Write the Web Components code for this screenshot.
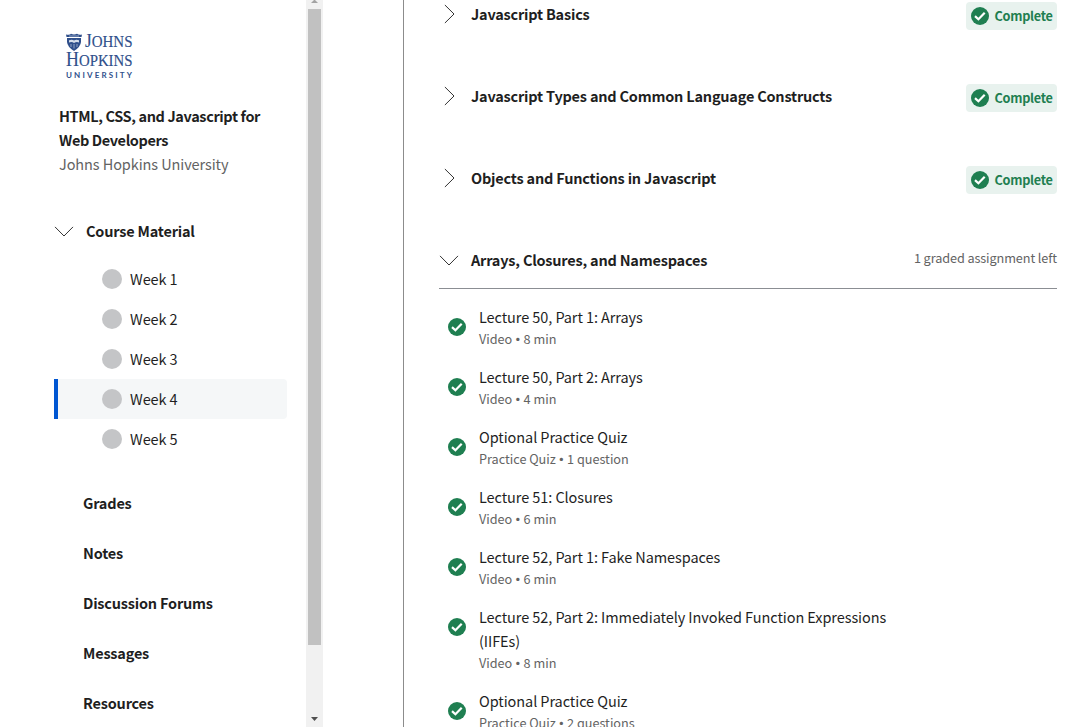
<!DOCTYPE html>
<html lang="en">
<head>
<meta charset="utf-8">
<title>HTML, CSS, and Javascript for Web Developers</title>
<style>
html,body{margin:0;height:100%;overflow:hidden;background:#fff}
body{font:14.5px/24px "Noto Sans CJK SC","Noto Sans",sans-serif;color:#1f1f1f}
</style>
</head>
<body>
<course-page></course-page>
<script>
const define = (name, html, setup) => {
  const template = document.createElement('template');
  template.innerHTML = html;
  customElements.define(name, class extends HTMLElement {
    constructor() {
      super();
      this.attachShadow({mode: 'open'}).append(template.content.cloneNode(true));
    }
    connectedCallback() { if (setup) setup(this, this.shadowRoot); }
  });
};

define('check-icon', `<style>:host{display:block;width:18px;height:18px;flex:none}svg{display:block}</style>
<svg width="18" height="18" viewBox="0 0 18 18"><circle cx="9" cy="9" r="9" fill="#1f7f51"/><path d="M4 9.100 7.400 12.200 13.700 5.700" fill="none" stroke="#fff" stroke-width="2.200"/></svg>`);

define('chevron-icon', `<style>:host{display:block;width:20px;height:20px;flex:none}:host([down]) svg{transform:rotate(90deg)}svg{display:block}</style>
<svg width="20" height="20" viewBox="0 0 20 20"><path d="M5.900 1 15 10 5.900 19" fill="none" stroke="#333" stroke-width="1"/></svg>`);

define('university-logo', `<style>:host{display:block;width:68px;height:46px}svg{display:block;overflow:visible}text{fill:#2f4f8b}.s{font-family:"Liberation Serif",serif;stroke:#2f4f8b;stroke-width:.15}.u{font:bold 8px Lato,sans-serif}</style>
<svg width="68" height="46" viewBox="0 0 68 46">
<path d="M0 1.500Q4 2.200 5 .8 8 2.300 11 .8 13 2.200 16 1.500L15.500 4H.5Z" fill="#2f4f8b"/>
<path d="M1 5H15V9Q14.500 14 8 18 1.500 14 1 9Z" fill="#2f4f8b"/>
<path d="M3 7.300Q6 6 8 7.400 10.500 6 13 7.300V9.500Q10.500 8.500 8 10 6 8.500 3 9.500Z" fill="#d5deeb"/>
<path d="M5 11V14M8 11V15.500M11 11V14M3 3H13" stroke="#a9b9d2" fill="none" stroke-width=".8"/>
<text class="s" x="19" y="14" font-size="19.500" textLength="47.500" lengthAdjust="spacingAndGlyphs">J<tspan font-size="17">OHNS</tspan></text>
<text class="s" x="0" y="33.300" font-size="20.500" textLength="66.500" lengthAdjust="spacingAndGlyphs">H<tspan font-size="17">OPKINS</tspan></text>
<text class="u" x="0" y="44.800" textLength="66">UNIVERSITY</text>
</svg>`);

define('week-link', `<style>
:host{display:flex;align-items:center;box-sizing:border-box;height:40px;padding-left:44px;gap:8px;border-left:4px solid transparent;border-radius:0 4px 4px 0}
:host([current]){background:#f5f7f8;border-left-color:#0056d2}
i{width:20px;height:20px;border-radius:50%;background:#c4c5c7}
span{height:24px;letter-spacing:-.1px}
</style><i></i><span><slot></slot></span>`);

define('nav-link', `<style>:host{display:flex;align-items:center;height:50px;padding-left:29px;font-weight:700;letter-spacing:-.2px}</style><slot></slot>`);

define('side-nav', `<style>
:host{display:block;box-sizing:border-box;width:306px;height:727px;overflow:hidden;padding:33px 19px 0 54px}
university-logo{margin-left:12px}
.title{margin:25px 0 0 5px;width:225px}
b{font-weight:700;display:block;letter-spacing:-.38px}
.org{color:#636363;letter-spacing:-.09px}
.material{display:flex;gap:12px;height:24px;margin-top:43px;font-weight:700;letter-spacing:-.2px}
.material chevron-icon{margin-top:2px}
.weeks{margin:16px 0 19px}
.weeks + nav-link{margin-top:20px}
</style>
<university-logo></university-logo>
<div class="title"><b>HTML, CSS, and Javascript for Web Developers</b><div class="org">Johns Hopkins University</div></div>
<div class="material"><chevron-icon down></chevron-icon><span>Course Material</span></div>
<div class="weeks" style="margin-bottom:0"><week-link>Week 1</week-link><week-link>Week 2</week-link><week-link>Week 3</week-link><week-link current>Week 4</week-link><week-link>Week 5</week-link></div>
<nav-link style="margin-top:19px">Grades</nav-link><nav-link>Notes</nav-link><nav-link>Discussion Forums</nav-link><nav-link>Messages</nav-link><nav-link>Resources</nav-link>`);

define('scroll-track', `<style>
:host{display:flex;flex-direction:column;align-items:center;width:17px;height:727px;background:#f1f1f1}
.thumb{width:13px;height:636px;background:#c1c1c1}
svg{display:block}.end{margin-top:72px}
</style>
<svg width="17" height="9"><path d="M8 0H9L12 3H5Z" fill="#a3a3a3"/></svg><div class="thumb"></div><svg class="end" width="17" height="10"><path d="M5 0H12L8.500 4Z" fill="#505050"/></svg>`);

define('complete-badge', `<style>
:host{display:flex;align-items:center;box-sizing:border-box;width:91px;height:28px;padding-left:5px;gap:5.500px;border-radius:4px;background:#e8f2ee;color:#1f7f51;font-weight:700;font-size:12.700px;line-height:20px;letter-spacing:-.28px}
</style><check-icon></check-icon><span>Complete</span>`);

define('module-row', `<style>
:host{display:flex;height:28px;line-height:26px}
chevron-icon{margin:3px 12px 0 0}
h2{margin:0;flex:1;font-size:inherit;font-weight:700;letter-spacing:-.21px}
::slotted(*){margin-top:1px}
</style><chevron-icon></chevron-icon><h2></h2><slot></slot>`, (el, root) => {
  root.querySelector('h2').textContent = el.getAttribute('heading');
  root.querySelector('chevron-icon').toggleAttribute('down', el.hasAttribute('open'));
});

define('lecture-item', `<style>
:host{display:flex;padding:8px 0 8px 9px;gap:13px;letter-spacing:-.08px}
check-icon{margin-top:12px}
.text{width:430px;margin:-1px 0 1px}
.meta{font-size:12.700px;line-height:20px;color:#636363;letter-spacing:-.02px}
.dot{margin:0 -3.500px;font-weight:700}
</style><check-icon></check-icon><div class="text"><div><slot></slot></div><div class="meta"><span class="kind"></span> <span class="dot">•</span> <span class="size"></span></div></div>`, (el, root) => {
  root.querySelector('.kind').textContent = el.getAttribute('kind');
  root.querySelector('.size').textContent = el.getAttribute('size');
});

define('course-content', `<style>
:host{display:block;box-sizing:border-box;width:688px;height:727px;margin-left:80px;border-left:1px solid #8c8c8c;padding:1px 34px 0 35px;overflow:hidden}
.modules{display:grid;gap:54px;padding-bottom:13px;border-bottom:1px solid #8b8e93;margin-bottom:9px}
.left{font-size:12.700px;line-height:20px;color:#636363;letter-spacing:-.1px}
</style>
<div class="modules">
<module-row heading="Javascript Basics"><complete-badge></complete-badge></module-row>
<module-row heading="Javascript Types and Common Language Constructs"><complete-badge></complete-badge></module-row>
<module-row heading="Objects and Functions in Javascript"><complete-badge></complete-badge></module-row>
<module-row open heading="Arrays, Closures, and Namespaces"><span class="left">1 graded assignment left</span></module-row>
</div>
<lecture-item kind="Video" size="8 min">Lecture 50, Part 1: Arrays</lecture-item>
<lecture-item kind="Video" size="4 min">Lecture 50, Part 2: Arrays</lecture-item>
<lecture-item kind="Practice Quiz" size="1 question">Optional Practice Quiz</lecture-item>
<lecture-item kind="Video" size="6 min">Lecture 51: Closures</lecture-item>
<lecture-item kind="Video" size="6 min">Lecture 52, Part 1: Fake Namespaces</lecture-item>
<lecture-item kind="Video" size="8 min">Lecture 52, Part 2: Immediately Invoked Function Expressions (IIFEs)</lecture-item>
<lecture-item kind="Practice Quiz" size="2 questions">Optional Practice Quiz</lecture-item>`);

define('course-page', `<style>:host{display:flex;width:1091px;height:727px;overflow:hidden}</style>
<side-nav></side-nav><scroll-track></scroll-track><course-content></course-content>`);
</script>
</body>
</html>
